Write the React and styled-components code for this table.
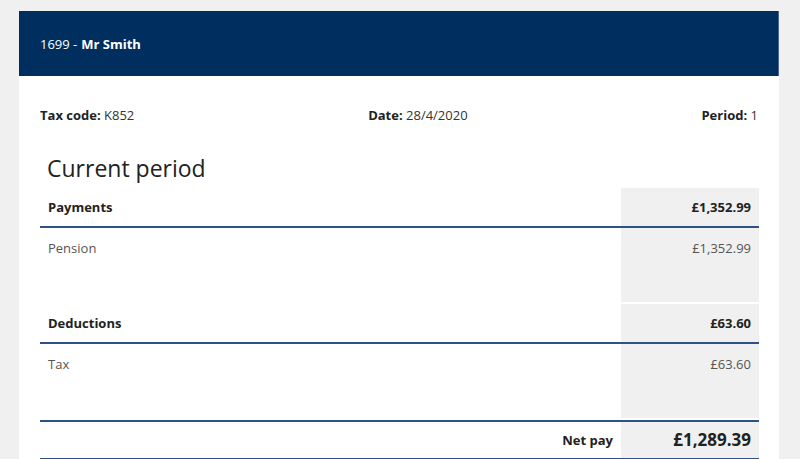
import styled, { createGlobalStyle } from "styled-components";

const GlobalStyle = createGlobalStyle`
  html, body {
    margin: 0;
    background: #f0f0f0;
  }
  body {
    font-family: "Open Sans", "Noto Sans", sans-serif;
    color: #222;
  }
`;

const payslip = {
  id: 1699,
  name: "Mr Smith",
  taxCode: "K852",
  date: "28/4/2020",
  period: 1,
  sections: [
    { title: "Payments", total: "£1,352.99", items: [{ label: "Pension", amount: "£1,352.99" }] },
    { title: "Deductions", total: "£63.60", items: [{ label: "Tax", amount: "£63.60" }] },
  ],
  netPay: "£1,289.39",
};

const App = () => {
  return (
    <>
      <GlobalStyle />
      <Card>
        <Header>
          {payslip.id} - <strong>{payslip.name}</strong>
        </Header>
        <Body>
          <Meta>
            <MetaItem>
              <b>Tax code:</b> {payslip.taxCode}
            </MetaItem>
            <MetaItem>
              <b>Date:</b> {payslip.date}
            </MetaItem>
            <MetaItem>
              <b>Period:</b> {payslip.period}
            </MetaItem>
          </Meta>
          <Title>Current period</Title>
          <Table>
            {payslip.sections.map((s) => (
              <Section key={s.title}>
                <Row $kind="head">
                  <Label>{s.title}</Label>
                  <Amount>{s.total}</Amount>
                </Row>
                {s.items.map((it) => (
                  <Row key={it.label} $kind="item">
                    <Label>{it.label}</Label>
                    <Amount>{it.amount}</Amount>
                  </Row>
                ))}
              </Section>
            ))}
            <Row $kind="total">
              <Label $right>Net pay</Label>
              <Amount $big>{payslip.netPay}</Amount>
            </Row>
          </Table>
        </Body>
      </Card>
    </>
  );
};

const Card = styled.div`
  margin: 11px 21px 0 19px;
  background: #fff;
  height: 460px;
`;

const Header = styled.div`
  background: #002f5f;
  border-right: 1px solid #4a6790;
  color: #fff;
  height: 65px;
  display: flex;
  align-items: center;
  padding: 0 21px;
  font-size: 13px;
  gap: 4px;

  strong {
    font-weight: 700;
  }
`;

const Body = styled.div`
  padding: 29px 20px 0 21px;
`;

const Meta = styled.div`
  display: flex;
  justify-content: space-between;
  font-size: 13px;
  line-height: 20px;
  color: #333;
  padding-right: 1px;
`;

const MetaItem = styled.div`
  b {
    font-weight: 700;
    color: #222;
  }
`;

const Title = styled.h1`
  margin: 25px 0 0 7px;
  font-size: 23px;
  font-weight: 400;
  line-height: 36px;
  color: #222;
`;

const Table = styled.div`
  margin-top: 2px;
  display: flex;
  flex-direction: column;
`;

const Section = styled.div`
  display: flex;
  flex-direction: column;
  margin-bottom: 2px;
`;

const rowHeights = { head: "38px", item: "74px", total: "36px" };

const Row = styled.div`
  display: flex;
  height: ${(p) => rowHeights[p.$kind]};
  align-items: ${(p) => (p.$kind === "item" ? "flex-start" : "center")};
  border-bottom: ${(p) => (p.$kind === "item" ? "none" : "2px solid #2f5286")};
  border-top: ${(p) => (p.$kind === "total" ? "2px solid #2f5286" : "none")};
  font-size: 13px;
  font-weight: ${(p) => (p.$kind === "item" ? 400 : 700)};
  color: ${(p) => (p.$kind === "item" ? "#555" : "#222")};

  & > * {
    padding-top: ${(p) => (p.$kind === "item" ? "10px" : "0")};
  }
`;

const Label = styled.div`
  flex: 1;
  align-self: stretch;
  display: flex;
  align-items: inherit;
  justify-content: ${(p) => (p.$right ? "flex-end" : "flex-start")};
  padding-left: 8px;
  padding-right: 8px;
  line-height: 20px;
`;

const Amount = styled.div`
  width: 138px;
  box-sizing: border-box;
  align-self: stretch;
  background: #f0f0f0;
  display: flex;
  align-items: inherit;
  justify-content: flex-end;
  padding-left: 8px;
  padding-right: 8px;
  line-height: 20px;
  font-size: ${(p) => (p.$big ? "17px" : "13px")};
`;

export default App;
